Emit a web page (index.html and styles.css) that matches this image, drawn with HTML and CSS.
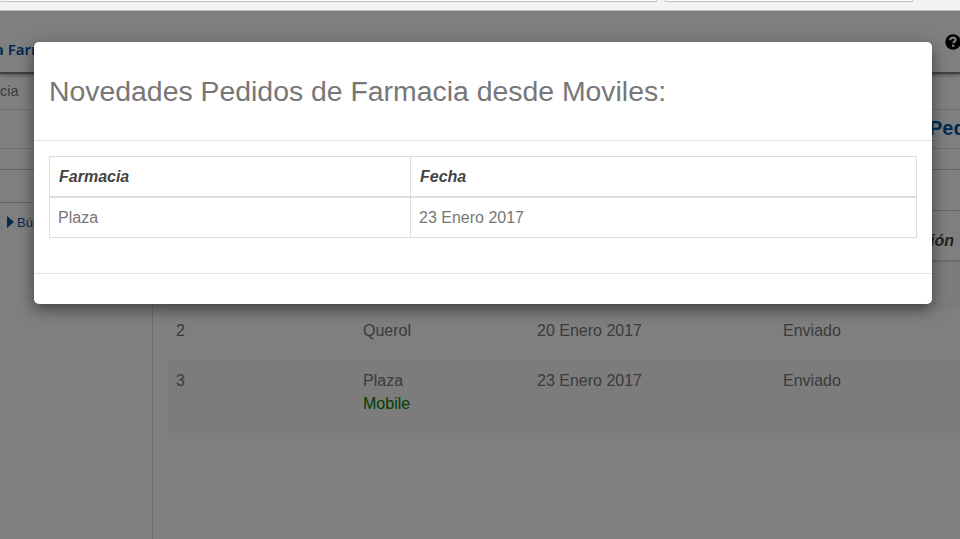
FILE: index.html
```
<!DOCTYPE html>
<html lang="es">
<head>
<meta charset="utf-8">
<title>Pedidos de Farmacia</title>
<link rel="stylesheet" href="styles.css">
</head>
<body>
<div class="toolbar">
  <div class="field field-url"></div>
  <div class="field field-search"></div>
</div>
<div class="page">
  <header class="topbar">
    <span class="brand">a Farm</span>
    <svg class="help" viewBox="0 0 16 16" width="16" height="16">
      <circle cx="8" cy="8" r="7.7" fill="#000"/>
      <path d="M5.3 6.3V5.9C5.3 4.4 6.4 3.6 8 3.6s2.6.8 2.6 2.3c0 1.7-2.3 1.7-2.3 3.4" fill="none" stroke="#fff" stroke-width="2.2"/>
      <path d="M7 10.7h2.4v2.1H7z" fill="#fff"/>
    </svg>
  </header>
  <div class="crumbs">cia</div>
  <div class="heading">Ped</div>
  <div class="spacer"></div>
  <div class="columns">
    <aside class="sidebar">
      <div class="side-head"></div>
      <a class="side-link"><svg width="7" height="12" viewBox="0 0 7 12"><path d="M0 0l7 6-7 6z" fill="#0055a5"/></svg>Bús</a>
    </aside>
    <main class="content">
      <div class="panel-head"></div>
      <table class="orders">
        <colgroup><col class="c-num"><col class="c-name"><col class="c-date"><col class="c-state"></colgroup>
        <thead><tr><th></th><th></th><th></th><th class="last">ión</th></tr></thead>
        <tbody>
          <tr class="row first odd"><td></td><td></td><td></td><td></td></tr>
          <tr class="row second"><td>2</td><td>Querol</td><td>20 Enero 2017</td><td>Enviado</td></tr>
          <tr class="row third odd"><td>3</td><td>Plaza<br><span class="mobile">Mobile</span></td><td>23 Enero 2017</td><td>Enviado</td></tr>
        </tbody>
      </table>
    </main>
  </div>
  <div class="backdrop">
    <section class="modal">
      <div class="modal-header"><h3>Novedades Pedidos de Farmacia desde Moviles:</h3></div>
      <div class="modal-body">
        <table class="news">
          <colgroup><col class="n-name"><col></colgroup>
          <thead><tr><th>Farmacia</th><th>Fecha</th></tr></thead>
          <tbody><tr><td>Plaza</td><td>23 Enero 2017</td></tr></tbody>
        </table>
      </div>
      <div class="modal-footer"></div>
    </section>
  </div>
</div>
</body>
</html>
```
FILE: styles.css
```
* { box-sizing: border-box; }
body {
  margin: 0;
  height: 539px;
  overflow: hidden;
  display: flex;
  flex-direction: column;
  background: #fff;
  color: #777;
  font: 16px/23px "Liberation Sans", Arial, sans-serif;
}
.toolbar {
  height: 11px;
  flex: none;
  display: flex;
  gap: 7px;
  background: #f3f2f0;
  border-bottom: 1px solid #b9bab5;
}
.field {
  height: 2px;
  background: #fff;
  border: 1px solid #bfc1bb;
  border-top: 0;
  border-radius: 0 0 2px 2px;
}
.field-url { width: 657px; border-left: 0; }
.field-search { width: 249px; }
.page { position: relative; flex: 1; overflow: hidden; }
.topbar {
  height: 63px;
  display: flex;
  justify-content: space-between;
  border-bottom: 2px solid #808080;
  box-shadow: 0 1px 4px rgba(0, 0, 0, .4);
}
.brand {
  padding-top: 26px;
  margin-left: -5px;
  color: #0055a5;
  font: 600 15px/24px "Noto Sans", sans-serif;
}
.help { margin: 22.5px -1px 0 0; }
.crumbs {
  height: 36px;
  padding-top: 6px;
  font-size: 14.4px;
  border-bottom: 1px solid #ddd;
}
.heading {
  height: 39px;
  padding: 7px 0 0 929px;
  color: #0055a5;
  font-size: 20px;
  font-weight: bold;
  border-bottom: 1px solid #ddd;
}
.spacer { height: 20px; }
.columns { display: flex; height: 370px; border-top: 1px solid #c4c4c4; }
.sidebar { width: 153px; flex: none; border-right: 1px solid #ddd; }
.side-head { height: 33px; border-bottom: 1px solid #c4c4c4; }
.side-link {
  display: flex;
  align-items: center;
  gap: 3px;
  padding: 8px 0 0 7px;
  color: #0055a5;
  font-size: 13px;
}
.side-link svg { margin-top: -2px; }
.content { flex: 1; padding-left: 15px; }
.panel-head { height: 41px; margin-left: -15px; border-bottom: 1px solid #c8c8c8; }
.orders { width: 100%; border-collapse: separate; border-spacing: 0; table-layout: fixed; }
.c-num { width: 187px; }
.c-name { width: 174px; }
.c-date { width: 246px; }
.orders th {
  height: 51px;
  padding: 10px 6px 0;
  color: #444;
  font-style: italic;
  text-align: right;
  border-bottom: 2px solid #ddd;
}
.orders td { padding: 9px 8px; vertical-align: top; }
.odd { background: #f9f9f9; }
.first { height: 48px; }
.second { height: 51px; }
.third { height: 72px; }
.third td { padding-top: 8px; }
.mobile { color: #008000; }
.backdrop {
  position: absolute;
  inset: 0;
  padding: 31px 28px 0 34px;
  background: rgba(0, 0, 0, .5);
}
.modal {
  height: 262px;
  background: #fff;
  border-radius: 5px;
  box-shadow: 0 5px 15px rgba(0, 0, 0, .5);
}
.modal-header { height: 99px; padding: 33px 15px 0; border-bottom: 1px solid #e5e5e5; }
.modal-header h3 { margin: 0; font-size: 28.4px; line-height: 32px; font-weight: normal; white-space: nowrap; }
.modal-body { height: 132px; padding: 15px 15px 0; }
.news { width: 868px; border-spacing: 0; border-top: 1px solid #ddd; border-left: 1px solid #ddd; table-layout: fixed; }
.n-name { width: 361px; }
.news th, .news td { height: 40px; padding: 0 8px; text-align: left; border-right: 1px solid #ddd; border-bottom: 1px solid #ddd; }
.news th { height: 41px; padding-left: 9px; color: #444; font-style: italic; border-bottom-width: 2px; }
.modal-footer { border-top: 1px solid #e5e5e5; }
```
